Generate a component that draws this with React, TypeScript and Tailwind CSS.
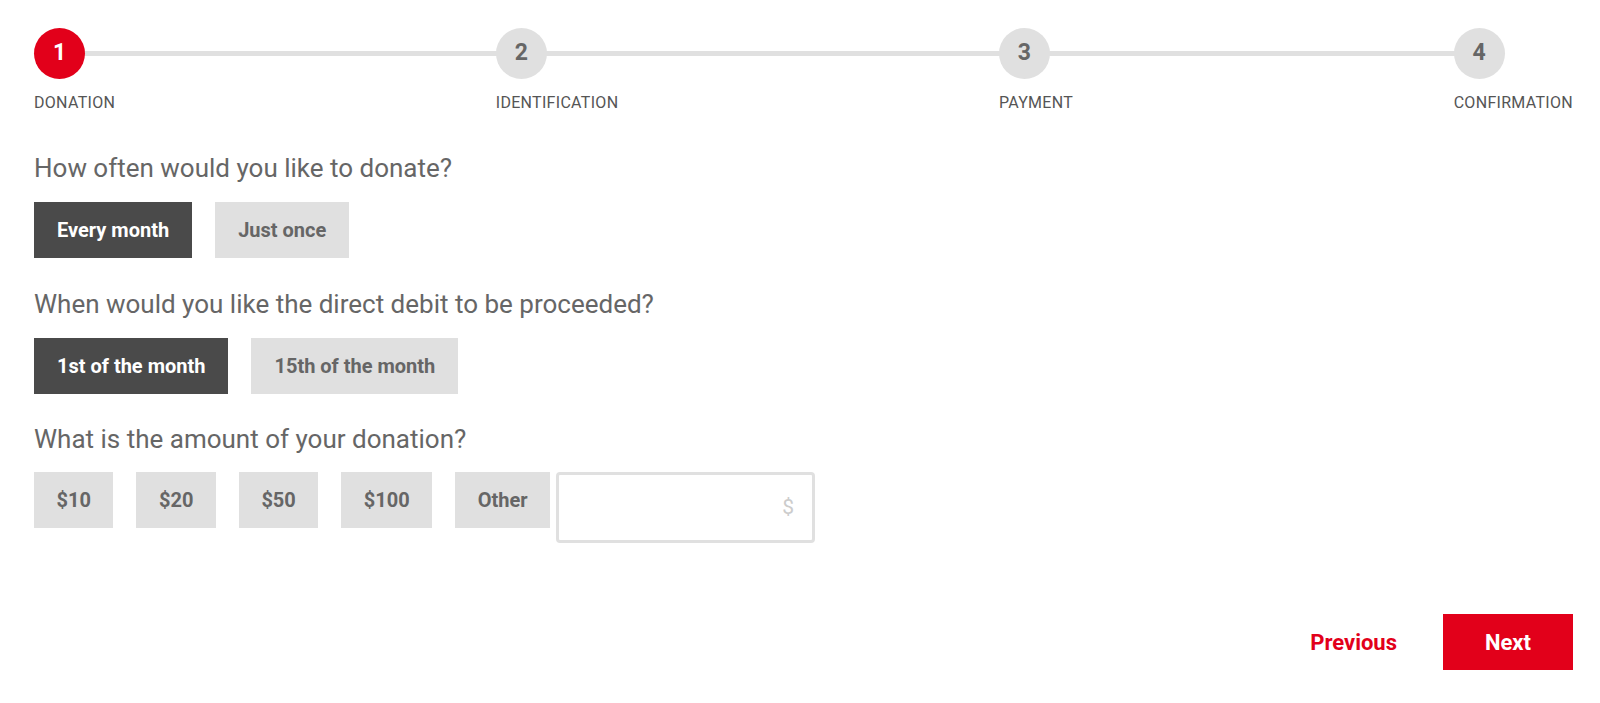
import React, { useState } from 'react';

const steps = [
  { n: 1, label: 'Donation' },
  { n: 2, label: 'Identification' },
  { n: 3, label: 'Payment' },
  { n: 4, label: 'Confirmation' },
];

interface ChoiceProps {
  label: string;
  active?: boolean;
  compact?: boolean;
  onClick?: () => void;
}

const Choice: React.FC<ChoiceProps> = ({ label, active, compact, onClick }) => (
  <button
    type="button"
    onClick={onClick}
    className={`h-[56px] text-[20px] font-bold ${compact ? 'px-[22.5px]' : 'px-[23px]'} ${
      active ? 'bg-[#4a4a4a] text-white' : 'bg-[#e0e0e0] text-[#666666]'
    }`}
  >
    {label}
  </button>
);

export default function App() {
  const [frequency, setFrequency] = useState('month');
  const [debitDay, setDebitDay] = useState('1st');
  const [amount, setAmount] = useState('');
  const current = 1;

  return (
    <div className="min-h-screen bg-white pl-[34px] pr-[27px] pt-[28px] font-['Roboto',sans-serif] text-[#666666]">
      {/* stepper */}
      <div className="relative flex justify-between">
        <div className="absolute left-[25px] right-[95px] top-[23px] h-[5px] bg-[#e0e0e0]" />
        {steps.map((s) => (
          <div key={s.n} className="relative flex flex-col items-start">
            <div
              className={`flex h-[51px] w-[51px] items-center justify-center rounded-full text-[23px] font-bold ${
                s.n === current ? 'bg-[#e2001a] text-white' : 'bg-[#e0e0e0] text-[#666666]'
              }`}
            >
              {s.n}
            </div>
            <span className="mt-[14px] text-[16px] uppercase leading-[20px] tracking-[0.3px] text-[#555555]">
              {s.label}
            </span>
          </div>
        ))}
      </div>

      {/* frequency */}
      <h2 className="mt-[40px] text-[26px] leading-[30px]">How often would you like to donate?</h2>
      <div className="mt-[19px] flex gap-[23px]">
        <Choice label="Every month" active={frequency === 'month'} onClick={() => setFrequency('month')} />
        <Choice label="Just once" active={frequency === 'once'} onClick={() => setFrequency('once')} />
      </div>

      {/* debit day */}
      <h2 className="mt-[31px] text-[26px] leading-[30px]">When would you like the direct debit to be proceeded?</h2>
      <div className="mt-[19px] flex gap-[23px]">
        <Choice label="1st of the month" active={debitDay === '1st'} onClick={() => setDebitDay('1st')} />
        <Choice label="15th of the month" active={debitDay === '15th'} onClick={() => setDebitDay('15th')} />
      </div>

      {/* amount */}
      <h2 className="mt-[30px] text-[26px] leading-[30px]">What is the amount of your donation?</h2>
      <div className="mt-[18px] flex items-start">
        <div className="flex gap-[23px]">
          {['$10', '$20', '$50', '$100', 'Other'].map((a) => (
            <Choice key={a} label={a} compact active={amount === a} onClick={() => setAmount(a)} />
          ))}
        </div>
        <div className="ml-[6px] flex h-[71px] w-[259px] items-center rounded-[4px] border-[3px] border-[#e0e0e0] px-[18px]">
          <input
            className="w-full bg-transparent text-[20px] text-[#444444] outline-none"
            aria-label="Other amount"
          />
          <span className="text-[21px] text-[#cccccc]">$</span>
        </div>
      </div>

      {/* navigation */}
      <div className="mt-[71px] flex justify-end gap-[24px]">
        <button type="button" className="h-[56px] px-[22px] text-[22px] font-bold text-[#e2001a]">
          Previous
        </button>
        <button type="button" className="h-[56px] w-[130px] bg-[#e2001a] text-[22px] font-bold text-white">
          Next
        </button>
      </div>
    </div>
  );
}
